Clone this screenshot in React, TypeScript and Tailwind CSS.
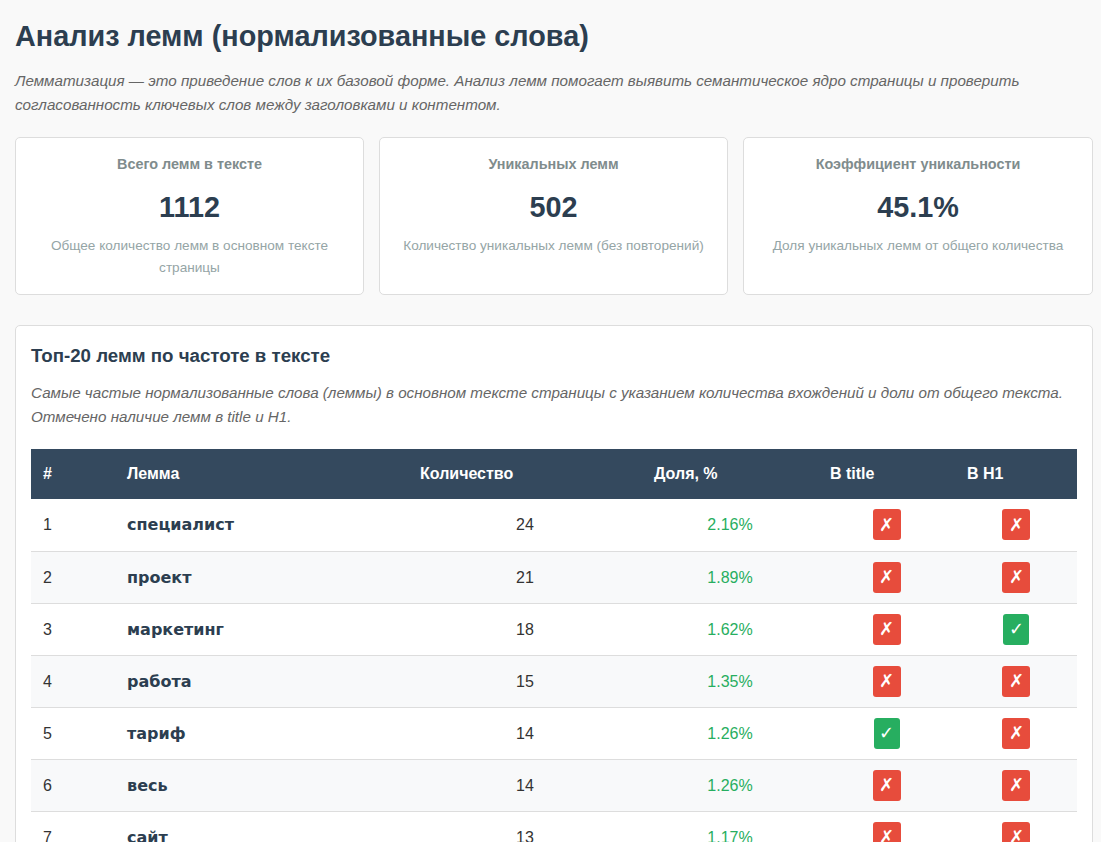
const stats = [
  { title: "Всего лемм в тексте", value: "1112", desc: "Общее количество лемм в основном тексте страницы" },
  { title: "Уникальных лемм", value: "502", desc: "Количество уникальных лемм (без повторений)" },
  { title: "Коэффициент уникальности", value: "45.1%", desc: "Доля уникальных лемм от общего количества" },
];

const rows = [
  { lemma: "специалист", count: 24, share: "2.16%", title: false, h1: false },
  { lemma: "проект", count: 21, share: "1.89%", title: false, h1: false },
  { lemma: "маркетинг", count: 18, share: "1.62%", title: false, h1: true },
  { lemma: "работа", count: 15, share: "1.35%", title: false, h1: false },
  { lemma: "тариф", count: 14, share: "1.26%", title: true, h1: false },
  { lemma: "весь", count: 14, share: "1.26%", title: false, h1: false },
  { lemma: "сайт", count: 13, share: "1.17%", title: false, h1: false },
];

const Badge = ({ ok }: { ok: boolean }) => (
  <span className={`inline-flex h-[31px] items-center justify-center rounded-[3px] align-middle text-lg text-white ${ok ? "w-[26px] bg-[#27ae60]" : "w-7 bg-[#e74c3c]"}`}>
    {ok ? "✓" : "✗"}
  </span>
);

export default function App() {
  return (
    <div className="h-[842px] overflow-hidden bg-[#f9f9f9] pl-[15px] pr-2 pt-[15px] font-['Liberation_Sans',Arial,sans-serif] text-base text-[#333]">
      <h1 className="mb-3 text-[28.8px] leading-[42px] font-bold text-[#2c3e50]">Анализ лемм (нормализованные слова)</h1>
      <p className="mb-5 text-[15.2px] leading-6 italic text-[#666]">
        Лемматизация — это приведение слов к их базовой форме. Анализ лемм помогает выявить семантическое ядро страницы и проверить согласованность ключевых слов между заголовками и контентом.
      </p>

      <div className="mb-[30px] grid grid-cols-[349px_349px_350px] gap-[15px]">
        {stats.map((s) => (
          <div key={s.title} className="rounded-[5px] border border-[#ddd] bg-white p-[15px] text-center">
            <div className="mb-2 text-[14.4px] leading-[23px] font-bold text-[#7f8c8d]">{s.title}</div>
            <div className="mb-[5px] text-[28.8px] leading-[46px] font-bold text-[#2c3e50]">{s.value}</div>
            <div className="text-[13.6px] leading-[22px] text-[#95a5a6]">{s.desc}</div>
          </div>
        ))}
      </div>

      <div className="rounded-[5px] border border-[#ddd] bg-white p-[15px]">
        <h2 className="mb-[10px] text-[18.7px] leading-[30px] font-bold text-[#2c3e50]">Топ-20 лемм по частоте в тексте</h2>
        <p className="mb-5 text-[15.2px] leading-6 italic text-[#666]">
          Самые частые нормализованные слова (леммы) в основном тексте страницы с указанием количества вхождений и доли от общего текста. Отмечено наличие лемм в title и H1.
        </p>
        <table className="w-full table-fixed border-collapse">
          <colgroup>
            <col className="w-[84px]" />
            <col className="w-[293px]" />
            <col className="w-[234px]" />
            <col className="w-[176px]" />
            <col className="w-[137px]" />
            <col className="w-[122px]" />
          </colgroup>
          <thead>
            <tr className="bg-[#34495e] text-left font-bold text-white">
              <th className="h-[50px] px-3">#</th>
              <th className="h-[50px] px-3">Лемма</th>
              <th className="h-[50px] px-3">Количество</th>
              <th className="h-[50px] px-3">Доля, %</th>
              <th className="h-[50px] px-3">В title</th>
              <th className="h-[50px] px-3">В H1</th>
            </tr>
          </thead>
          <tbody>
            {rows.map((r, idx) => (
              <tr key={r.lemma} className={`border-b border-[#ddd] ${idx % 2 === 1 ? "bg-[#f8f9fa]" : "bg-white"}`}>
                <td className="h-[52px] px-3 pt-px">{idx + 1}</td>
                <td className="h-[52px] px-3 pt-px font-['DejaVu_Sans',sans-serif] font-bold text-[#2c3e50]">{r.lemma}</td>
                <td className="h-[52px] px-3 pt-px text-center">{r.count}</td>
                <td className="h-[52px] px-3 pt-px text-center text-[#27ae60]">{r.share}</td>
                <td className="h-[52px] px-3 text-center"><Badge ok={r.title} /></td>
                <td className="h-[52px] px-3 text-center"><Badge ok={r.h1} /></td>
              </tr>
            ))}
          </tbody>
        </table>
      </div>
    </div>
  );
}
